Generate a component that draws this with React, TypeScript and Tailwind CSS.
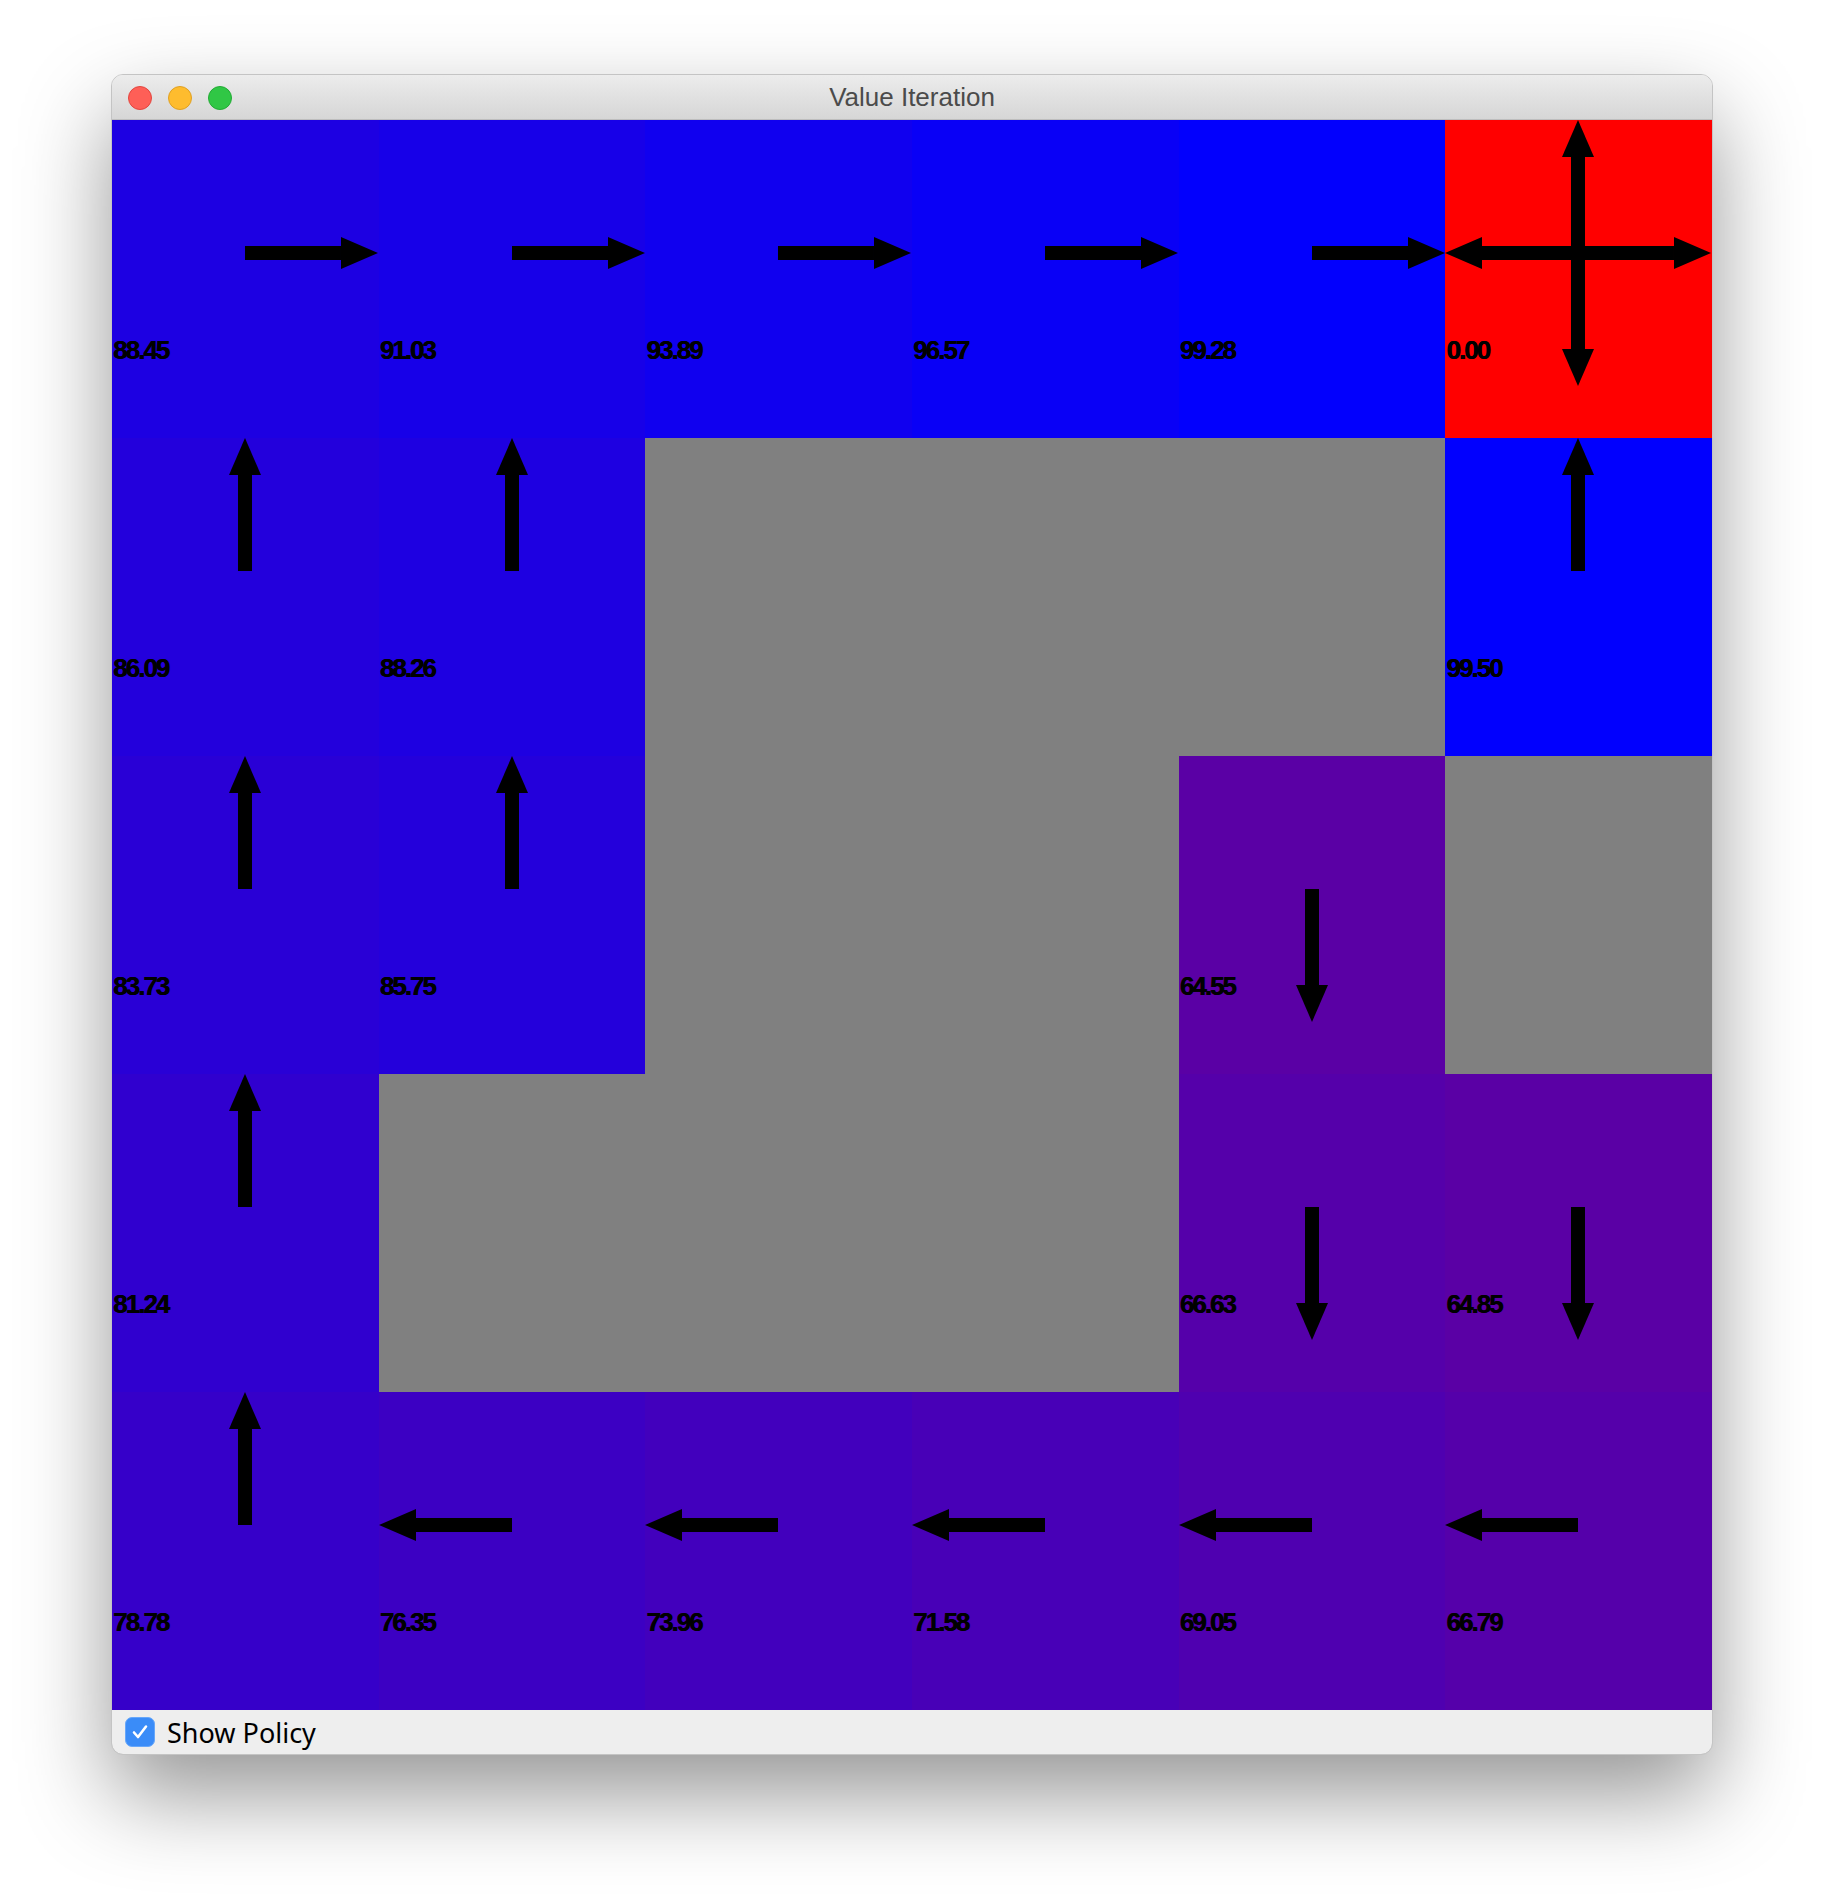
import React from 'react';

type Dir = 'up' | 'down' | 'left' | 'right' | 'all' | null;

interface Cell {
  value?: number;
  dir?: Dir;
  wall?: boolean;
  terminal?: boolean;
}

const W = 266.67;
const H = 318;
const C = 133;

const grid: Cell[][] = [
  [
    { value: 88.45, dir: 'right' },
    { value: 91.03, dir: 'right' },
    { value: 93.89, dir: 'right' },
    { value: 96.57, dir: 'right' },
    { value: 99.28, dir: 'right' },
    { value: 0, dir: 'all', terminal: true },
  ],
  [
    { value: 86.09, dir: 'up' },
    { value: 88.26, dir: 'up' },
    { wall: true },
    { wall: true },
    { wall: true },
    { value: 99.5, dir: 'up' },
  ],
  [
    { value: 83.73, dir: 'up' },
    { value: 85.75, dir: 'up' },
    { wall: true },
    { wall: true },
    { value: 64.55, dir: 'down' },
    { wall: true },
  ],
  [
    { value: 81.24, dir: 'up' },
    { wall: true },
    { wall: true },
    { wall: true },
    { value: 66.63, dir: 'down' },
    { value: 64.85, dir: 'down' },
  ],
  [
    { value: 78.78, dir: 'up' },
    { value: 76.35, dir: 'left' },
    { value: 73.96, dir: 'left' },
    { value: 71.58, dir: 'left' },
    { value: 69.05, dir: 'left' },
    { value: 66.79, dir: 'left' },
  ],
];

// colour goes from blue (100) towards red as the value drops
const cellColor = (cell: Cell) => {
  if (cell.wall) return '#808080';
  if (cell.terminal) return '#ff0000';
  const r = Math.round(255 * (1 - (cell.value ?? 0) / 100));
  return `rgb(${r}, 0, ${255 - r})`;
};

// arrow pointing right from the centre, rotated for the other directions
const Arrow: React.FC<{ angle: number }> = ({ angle }) => (
  <g transform={`rotate(${angle} ${C} ${C})`}>
    <rect x={C} y={C - 7} width={C - 37} height={14} fill="#000" />
    <polygon points={`${C * 2 - 37},${C - 16} ${C * 2},${C} ${C * 2 - 37},${C + 16}`} fill="#000" />
  </g>
);

const angles: Record<string, number[]> = {
  right: [0],
  down: [90],
  left: [180],
  up: [270],
  all: [0, 90, 180, 270],
};

const GridCell: React.FC<{ cell: Cell; showPolicy: boolean }> = ({ cell, showPolicy }) => (
  <div className="relative h-[318px]" style={{ backgroundColor: cellColor(cell) }}>
    {!cell.wall && (
      <>
        {showPolicy && cell.dir && (
          <svg className="absolute inset-0" width="100%" height="100%" viewBox={`0 0 ${W} ${H}`} preserveAspectRatio="none">
            {angles[cell.dir].map((a) => (
              <Arrow key={a} angle={a} />
            ))}
          </svg>
        )}
        <div className="pt-[217px] pl-px text-[26px] leading-[26px] font-bold tracking-[-2px] text-black font-['Liberation_Sans',sans-serif] [text-shadow:0.6px_0_0_#000]">
          {(cell.value ?? 0).toFixed(2)}
        </div>
      </>
    )}
  </div>
);

const App: React.FC = () => {
  const showPolicy = true;

  return (
    <div className="min-h-[1902px] bg-white pt-[75px] pl-[112px]">
      <div className="w-[1600px] rounded-[11px] overflow-hidden outline outline-[#c4c4c4] shadow-[0_40px_90px_rgba(0,0,0,0.42)] bg-[#eeeeee]">
        <div className="relative h-[45px] flex items-center justify-center bg-gradient-to-b from-[#ececec] to-[#d6d6d6] border-b border-[#bdbdbd]">
          <div className="absolute left-[16px] top-[11px] flex gap-[16px]">
            <span className="w-[24px] h-[24px] rounded-full bg-[#fe5f57] border border-[#e2463f]" />
            <span className="w-[24px] h-[24px] rounded-full bg-[#febc2e] border border-[#dfa023]" />
            <span className="w-[24px] h-[24px] rounded-full bg-[#30c745] border border-[#23ab35]" />
          </div>
          <span className="text-[26px] text-[#4b4b4b] font-['Liberation_Sans',sans-serif]">Value Iteration</span>
        </div>
        <div className="grid grid-cols-6">
          {grid.map((row, ri) =>
            row.map((cell, ci) => <GridCell key={`${ri}-${ci}`} cell={cell} showPolicy={showPolicy} />)
          )}
        </div>
        <div className="h-[44px] flex items-center pl-[13px] gap-[12px]">
          <span className="w-[30px] h-[30px] rounded-[7px] bg-[#3a8cf8] border border-[#67a7fa] flex items-center justify-center">
            <svg width="18" height="18" viewBox="0 0 18 18">
              <path d="M3 9.5 L7 14 L15 3.5" stroke="#fff" strokeWidth="2.6" fill="none" strokeLinecap="round" strokeLinejoin="round" />
            </svg>
          </span>
          <span className="text-[27px] text-black font-['Noto_Sans',sans-serif] leading-none">Show Policy</span>
        </div>
      </div>
    </div>
  );
};

export default App;
